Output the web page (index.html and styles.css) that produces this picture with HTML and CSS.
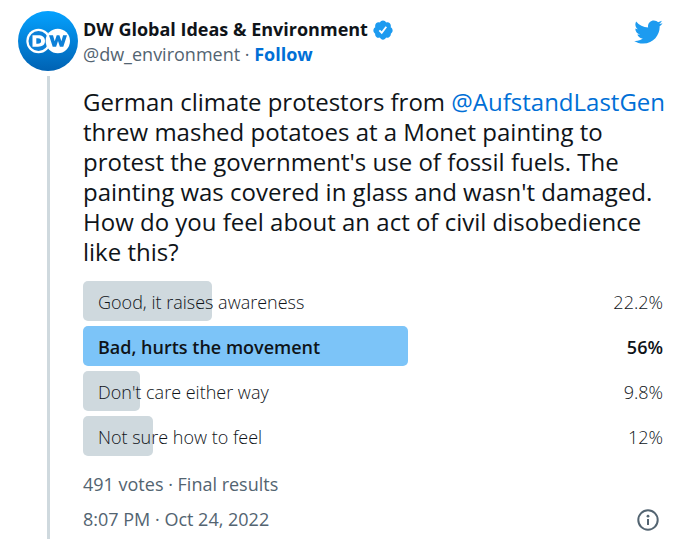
FILE: index.html
```html
<!DOCTYPE html>
<html lang="en">
<head>
<meta charset="utf-8">
<meta name="viewport" content="width=device-width, initial-scale=1">
<title>DW Global Ideas &amp; Environment</title>
<link rel="stylesheet" href="styles.css">
</head>
<body>
<article class="tweet">
  <div class="rail">
    <svg class="avatar" viewBox="0 0 60 60" aria-hidden="true">
      <defs>
        <linearGradient id="sky" x1="0" y1="0" x2="0" y2="1">
          <stop offset="0" stop-color="#05a2ff"/>
          <stop offset="1" stop-color="#0062b3"/>
        </linearGradient>
      </defs>
      <circle cx="30" cy="30" r="30" fill="url(#sky)"/>
      <circle cx="20.500" cy="30" r="12.200" fill="#fff"/>
      <circle cx="20.500" cy="30" r="10" fill="#0c80d8"/>
      <circle cx="39.800" cy="30" r="12.200" fill="#fff"/>
      <path d="M14.500 24.300h5.500c4.500 0 7 2 7 5.700s-2.500 5.700-7 5.700h-5.500zM18.300 27.200v5.600h1.600c2.200 0 3.200-1 3.200-2.800s-1-2.800-3.200-2.800z" fill="#fff" fill-rule="evenodd"/>
      <path d="M31 24.300h4l1.700 6 2-6h2.700l2 6 1.700-6h3.900l-3.700 11.400h-3.400l-1.900-5.700-1.900 5.700h-3.400z" fill="#0c80d8"/>
    </svg>
    <div class="thread"></div>
  </div>
  <div class="main">
    <header class="head">
      <div class="author">
        <div class="name-row">
          <a class="name" href="#">DW Global Ideas &amp; Environment</a>
          <svg class="badge" viewBox="0 0 24 24" role="img" aria-label="Verified account"><path fill="#1d9bf0" d="M22.500 12.500c0-1.580-.875-2.950-2.148-3.600.154-.435.238-.905.238-1.400 0-2.210-1.710-3.998-3.818-3.998-.47 0-.92.084-1.336.25C14.818 2.415 13.510 1.500 12 1.500s-2.816.917-3.437 2.250c-.415-.165-.866-.25-1.336-.25-2.110 0-3.818 1.790-3.818 4 0 .494.083.964.237 1.400-1.272.650-2.147 2.018-2.147 3.600 0 1.495.782 2.798 1.942 3.486-.020.170-.032.340-.032.514 0 2.210 1.708 4 3.818 4 .470 0 .920-.086 1.335-.250.620 1.334 1.926 2.250 3.437 2.250 1.512 0 2.818-.916 3.437-2.250.415.163.865.248 1.336.248 2.110 0 3.818-1.790 3.818-4 0-.174-.012-.344-.033-.513 1.158-.687 1.943-1.990 1.943-3.484z"/><path d="M8 12.400l2.600 2.600 5-6.600" fill="none" stroke="#fff" stroke-width="2"/></svg>
        </div>
        <div class="handle-row"><a class="handle" href="#">@dw_environment</a> · <a class="follow" href="#">Follow</a></div>
      </div>
      <a class="bird" href="#" aria-label="Twitter"><svg viewBox="0 0 24 24" aria-hidden="true"><path fill="#1d9bf0" d="M23.643 4.937c-.835.370-1.732.620-2.675.733.962-.576 1.700-1.490 2.048-2.578-.900.534-1.897.922-2.958 1.130-.850-.904-2.060-1.470-3.400-1.470-2.572 0-4.658 2.086-4.658 4.660 0 .364.042.718.120 1.060-3.873-.195-7.304-2.050-9.602-4.868-.400.690-.630 1.490-.630 2.342 0 1.616.823 3.043 2.072 3.878-.764-.025-1.482-.234-2.110-.583v.060c0 2.257 1.605 4.140 3.737 4.568-.392.106-.803.162-1.227.162-.300 0-.593-.028-.877-.082.593 1.850 2.313 3.198 4.352 3.234-1.595 1.250-3.604 1.995-5.786 1.995-.376 0-.747-.022-1.112-.065 2.062 1.323 4.510 2.093 7.140 2.093 8.570 0 13.255-7.098 13.255-13.254 0-.200-.005-.402-.014-.602.910-.658 1.700-1.477 2.323-2.410z"/></svg></a>
    </header>
    <p class="text">German climate protestors from <a href="#">@AufstandLastGen</a> threw mashed potatoes at a Monet painting to protest the government's use of fossil fuels. The painting was covered in glass and wasn't damaged. How do you feel about an act of civil disobedience like this?</p>
    <ul class="poll">
      <li class="option"><span class="bar" style="width:22.2%"></span><span class="label">Good, it raises awareness</span><span class="share">22.2%</span></li>
      <li class="option winner"><span class="bar" style="width:56%"></span><span class="label">Bad, hurts the movement</span><span class="share">56%</span></li>
      <li class="option"><span class="bar" style="width:9.8%"></span><span class="label">Don't care either way</span><span class="share">9.8%</span></li>
      <li class="option"><span class="bar" style="width:12%"></span><span class="label">Not sure how to feel</span><span class="share">12%</span></li>
    </ul>
    <div class="meta">491 votes · Final results</div>
    <footer class="meta foot">
      <time datetime="2022-10-24T20:07">8:07 PM · Oct 24, 2022</time>
      <a class="info" href="#" aria-label="Twitter Ads info and privacy"><svg viewBox="0 0 24 24" aria-hidden="true"><circle cx="12" cy="12" r="9.700" fill="none" stroke="#536471" stroke-width="2"/><circle cx="12" cy="8.200" r="1.400" fill="#536471"/><path d="M11 11h2v6h-2z" fill="#536471"/></svg></a>
    </footer>
  </div>
</article>
</body>
</html>
```
FILE: styles.css
```css
* {
  box-sizing: border-box;
}

body {
  margin: 0;
  background: #fff;
  color: #0f1419;
  font-family: "Open Sans", "Noto Sans", sans-serif;
  font-size: 18px;
  line-height: 25px;
}

a {
  color: #006fd6;
  text-decoration: none;
}

svg {
  display: block;
}

.tweet {
  display: flex;
  gap: 5px;
  padding: 11px 21px 5px 18px;
}

.rail {
  display: flex;
  flex-direction: column;
  align-items: center;
  gap: 5px;
  flex: 0 0 60px;
}

.avatar {
  width: 60px;
  height: 60px;
}

.thread {
  flex: 1;
  width: 3px;
  background: #cfd9de;
}

.main {
  flex: 1;
  min-width: 0;
  padding-bottom: 7px;
}

.head {
  display: flex;
  justify-content: space-between;
  padding-top: 6px;
}

.name-row {
  display: flex;
  align-items: center;
  gap: 4px;
}

.name {
  color: #0f1419;
  font-weight: 700;
}

.badge {
  width: 22px;
  height: 22px;
}

.handle-row,
.handle {
  color: #536471;
}

.follow {
  font-weight: 700;
}

.bird svg {
  width: 30px;
  height: 30px;
}

.text {
  margin: 20px -12px 14px 0;
  font-size: 24px;
  line-height: 30px;
}

.poll {
  display: grid;
  gap: 5px;
  margin: 0;
  padding: 0;
  list-style: none;
}

.option {
  position: relative;
  display: flex;
  align-items: center;
  justify-content: space-between;
  height: 40px;
  padding: 2px 0 0 15px;
  font-weight: 300;
}

.bar {
  position: absolute;
  inset: 0 auto 0 0;
  border-radius: 5px;
  background: #cfd9de;
}

.winner {
  font-weight: 600;
}

.winner .bar {
  background: #7cc4f8;
}

.label,
.share {
  position: relative;
}

.meta {
  margin-top: 16px;
  color: #536471;
}

.foot {
  display: flex;
  align-items: center;
  justify-content: space-between;
  margin-top: 10px;
}

.info {
  padding-right: 3px;
}

.info svg {
  width: 24px;
  height: 24px;
}
```
